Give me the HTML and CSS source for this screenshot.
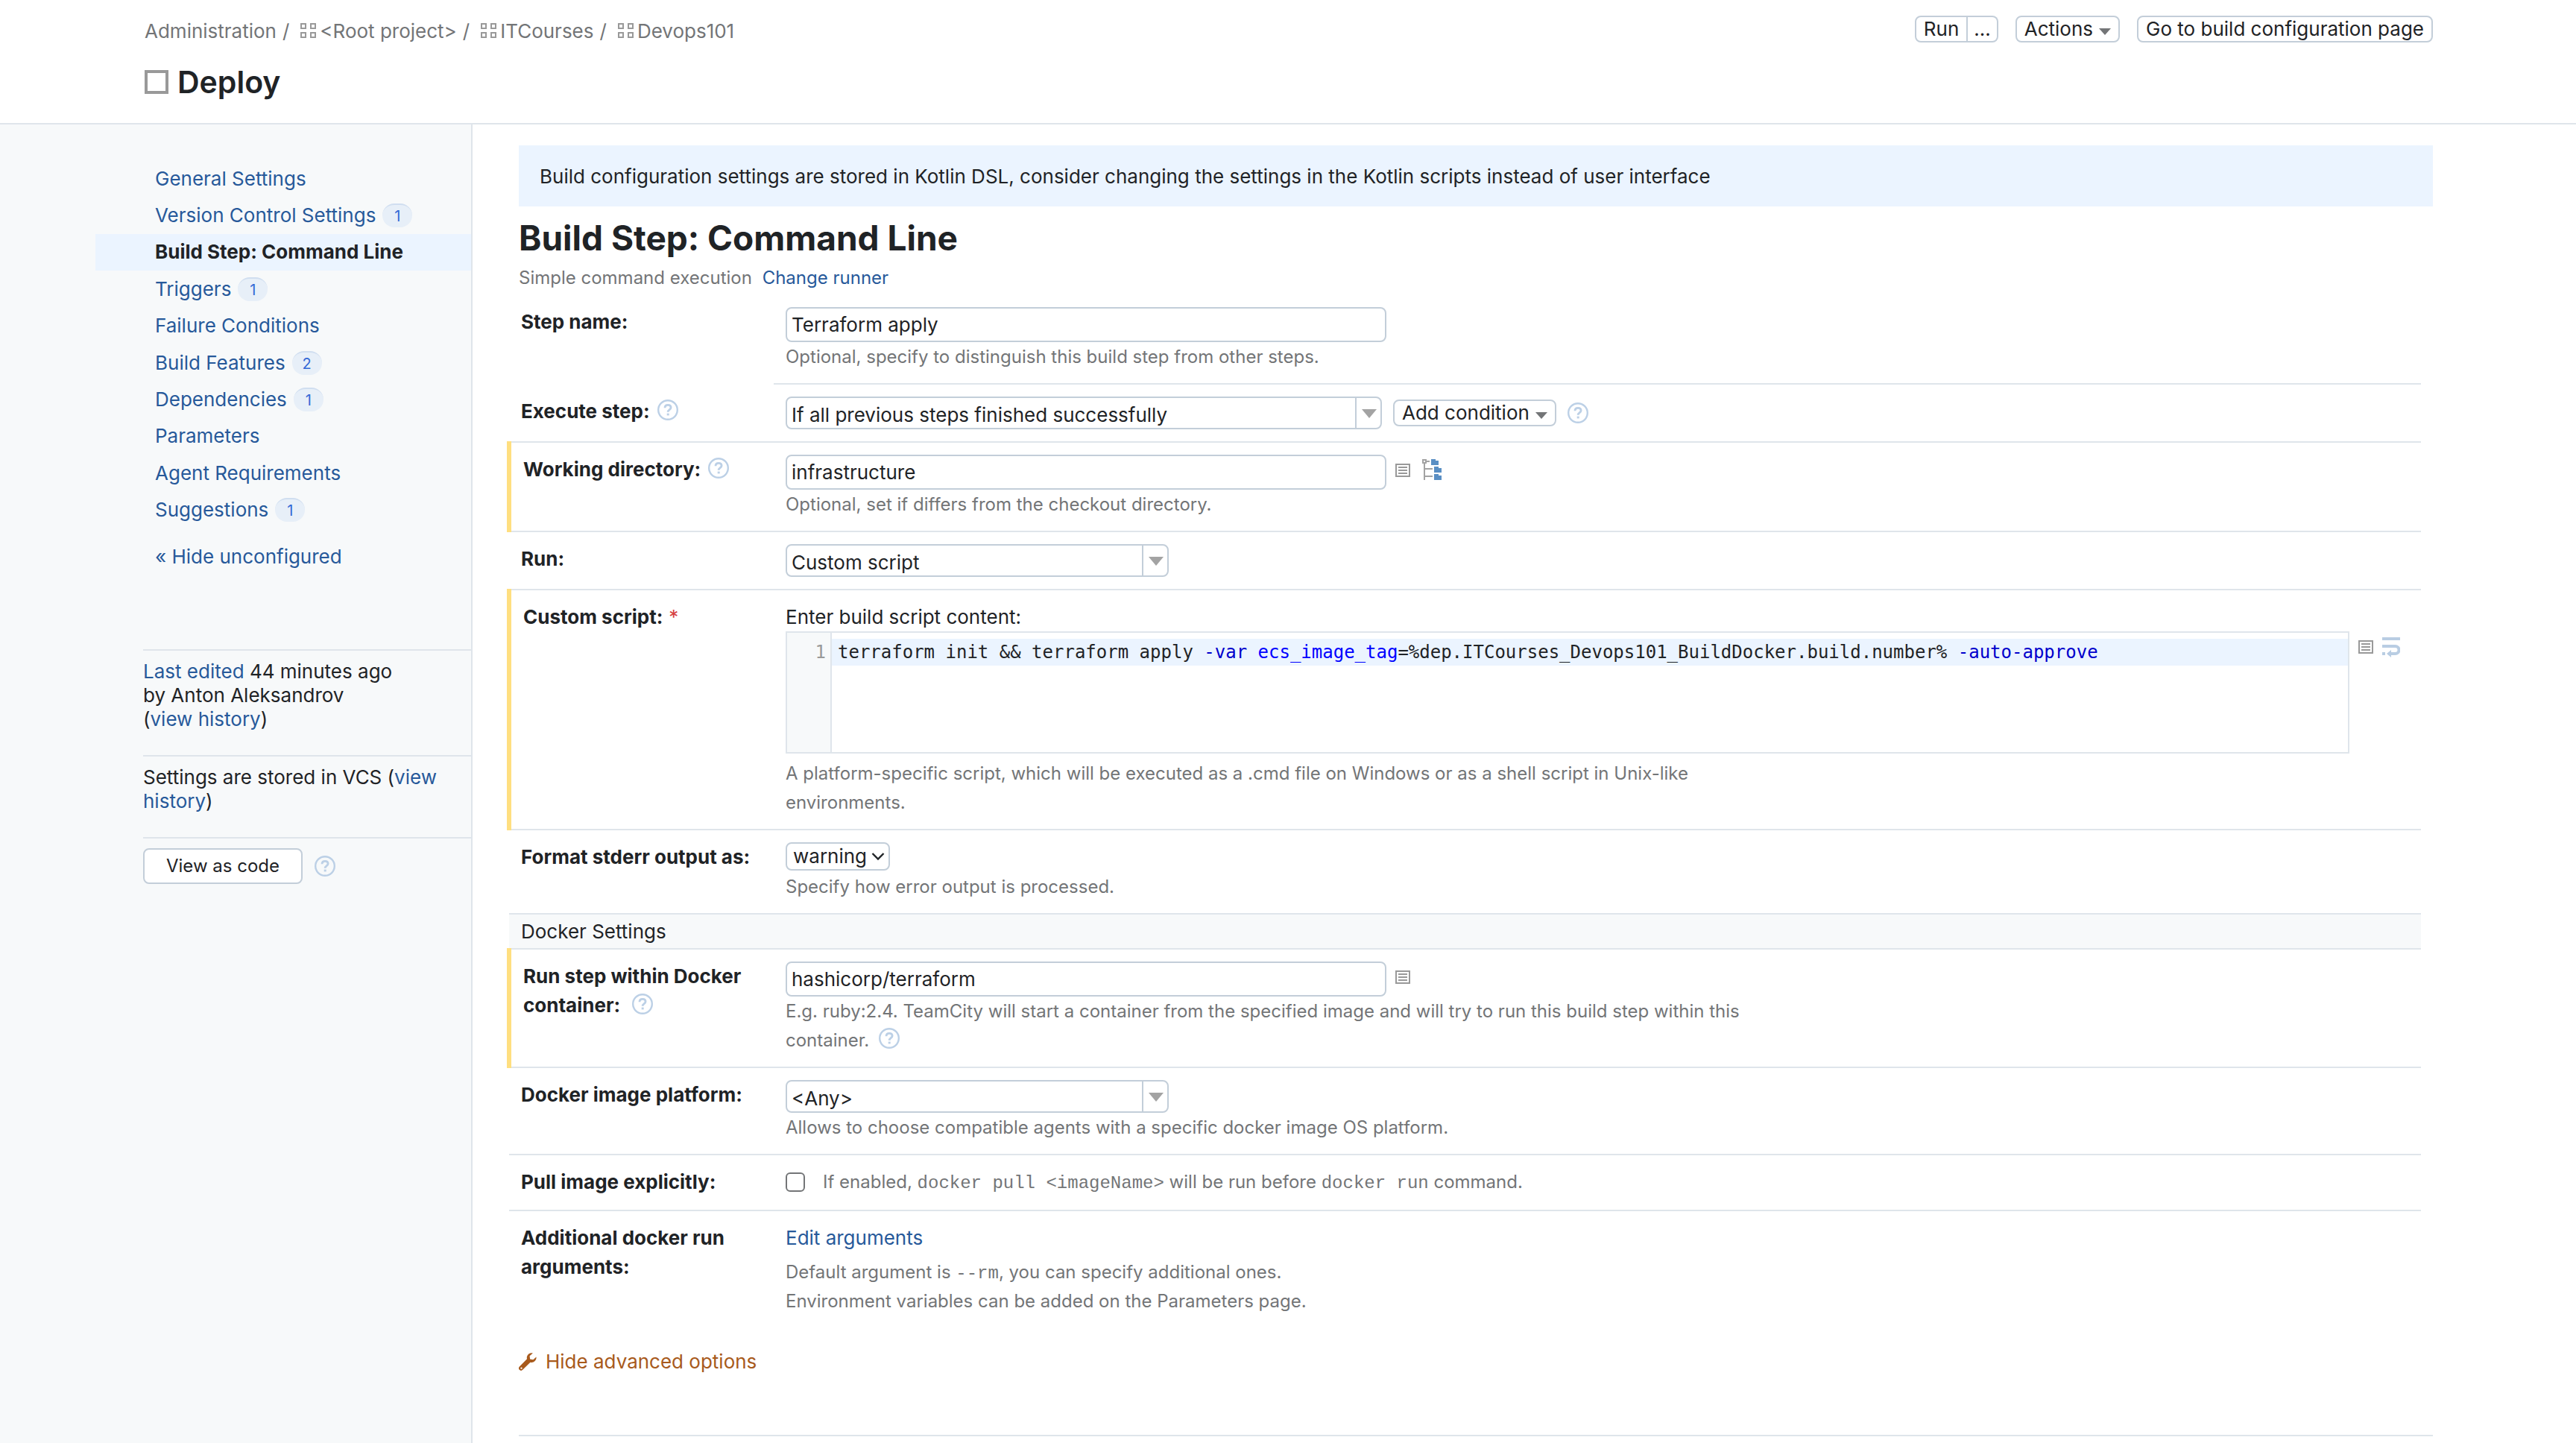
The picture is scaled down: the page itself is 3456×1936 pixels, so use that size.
FILE: index.html
```html
<!DOCTYPE html>
<html lang="en">
<head>
<meta charset="utf-8">
<title>Deploy – Build Step: Command Line</title>
<link rel="stylesheet" href="styles.css">
</head>
<body>
<svg class="sprite" aria-hidden="true">
  <symbol id="i-project" viewBox="0 0 22 20"><path d="M1 1h6v6H1zM14 1h6v6h-6zM1 13h6v6H1zM14 13h6v6h-6z" fill="none" stroke="#999" stroke-width="2"/></symbol>
  <symbol id="i-help" viewBox="0 0 28 28"><circle cx="14" cy="14" r="12.8" fill="none" stroke="#bcd0e6" stroke-width="2.4"/><path d="M10 11.200c0-2.400 1.700-3.900 4.100-3.900s4 1.400 4 3.500c0 3-3.900 2.800-3.900 6" fill="none" stroke="#bcd0e6" stroke-width="2.800"/><path d="M12.700 18.600h3v2.800h-3z" fill="#bcd0e6"/></symbol>
  <symbol id="i-params" viewBox="0 0 20 18"><path d="M1 1h18v16H1z" fill="none" stroke="#999" stroke-width="2"/><path d="M4 5h12M4 9h12M4 13h12" stroke="#999" stroke-width="2"/></symbol>
  <symbol id="i-tree" viewBox="0 0 26 28"><path d="M1 1h4v4H1zM6 3h4M3 6v22M4 13h10M4 23h10" fill="none" stroke="#a3a3a3" stroke-width="2"/><path d="M12 0h6v2h4v6H12zM16 10h6v2h4v6H16zM16 20h6v2h4v6H16z" fill="#5a8fc4"/></symbol>
  <symbol id="i-wrap" viewBox="0 0 24 28"><path d="M0 2h24M0 12h17.500a5 5 0 0 1 0 10H11M0 22h4" fill="none" stroke="#b9cde3" stroke-width="4"/><path d="M12 17v10l-6-5z" fill="#b9cde3"/></symbol>
  <symbol id="i-wrench" viewBox="0 0 24 24"><path d="M23.500 5.500l-4.200 3.700-4.200-.700-.500-4.200L18.800.500C15.500-.300 12 1.500 11 5c-.300 1.200-.200 2.200 0 3.300L.900 18.600a3 3 0 0 0 0 4.200 3 3 0 0 0 4.300 0L15.500 12.800c4.500 1 8.500-2.300 8-7.300zM3.500 21.800a1.200 1.200 0 1 1 0-2.400 1.200 1.200 0 0 1 0 2.400z" fill="#a85a1c" fill-rule="evenodd"/></symbol>
</svg>

<header class="header">
  <div class="topline">
    <nav class="crumbs" aria-label="Breadcrumb">
      <a href="#">Administration</a><span class="sep">/</span>
      <a href="#"><svg class="i-project"><use href="#i-project"/></svg>&lt;Root project&gt;</a><span class="sep">/</span>
      <a href="#"><svg class="i-project"><use href="#i-project"/></svg>ITCourses</a><span class="sep">/</span>
      <a href="#"><svg class="i-project"><use href="#i-project"/></svg>Devops101</a>
    </nav>
    <div class="actions">
      <div class="split"><button class="btn" type="button">Run</button><button class="btn more" type="button">...</button></div>
      <button class="btn" type="button">Actions<span class="caret"></span></button>
      <button class="btn" type="button">Go to build configuration page</button>
    </div>
  </div>
  <h1><span class="config-icon"></span>Deploy</h1>
</header>

<div class="body">
  <aside class="sidebar">
    <nav aria-label="Settings">
      <ul class="menu">
        <li><a href="#">General Settings</a></li>
        <li><a href="#">Version Control Settings</a><span class="count">1</span></li>
        <li class="current"><a href="#">Build Step: Command Line</a></li>
        <li><a href="#">Triggers</a><span class="count">1</span></li>
        <li><a href="#">Failure Conditions</a></li>
        <li><a href="#">Build Features</a><span class="count">2</span></li>
        <li><a href="#">Dependencies</a><span class="count">1</span></li>
        <li><a href="#">Parameters</a></li>
        <li><a href="#">Agent Requirements</a></li>
        <li><a href="#">Suggestions</a><span class="count">1</span></li>
      </ul>
      <a class="toggle" href="#">« Hide unconfigured</a>
    </nav>
    <div class="info">
      <p><a href="#">Last edited</a> 44 minutes ago<br>by Anton Aleksandrov<br>(<a href="#">view history</a>)</p>
      <p>Settings are stored in VCS (<a href="#">view history</a>)</p>
      <div class="code-row"><button class="btn big" type="button">View as code</button><svg class="help"><use href="#i-help"/></svg></div>
    </div>
  </aside>

  <main class="main">
    <div class="notice">Build configuration settings are stored in Kotlin DSL, consider changing the settings in the Kotlin scripts instead of user interface</div>
    <h2>Build Step: Command Line</h2>
    <p class="runner">Simple command execution <a href="#">Change runner</a></p>

    <form class="form">
      <div class="row short">
        <label class="name" for="step">Step name:</label>
        <div class="field">
          <input class="text" id="step" type="text" value="Terraform apply">
          <p class="note">Optional, specify to distinguish this build step from other steps.</p>
        </div>
      </div>
      <div class="row">
        <div class="name"><label for="exec">Execute step:</label><svg class="help"><use href="#i-help"/></svg></div>
        <div class="field">
          <div class="line">
            <div class="combo wide"><select id="exec"><option>If all previous steps finished successfully</option></select></div>
            <button class="btn" type="button">Add condition<span class="caret"></span></button>
            <svg class="help"><use href="#i-help"/></svg>
          </div>
        </div>
      </div>
      <div class="row changed">
        <div class="name"><label for="dir">Working directory:</label><svg class="help"><use href="#i-help"/></svg></div>
        <div class="field">
          <div class="line icons">
            <input class="text" id="dir" type="text" value="infrastructure">
            <svg class="params"><use href="#i-params"/></svg>
            <svg class="tree"><use href="#i-tree"/></svg>
          </div>
          <p class="note">Optional, set if differs from the checkout directory.</p>
        </div>
      </div>
      <div class="row">
        <label class="name" for="run">Run:</label>
        <div class="field"><div class="combo"><select id="run"><option>Custom script</option></select></div></div>
      </div>
      <div class="row changed">
        <div class="name">Custom script:<span class="star">*</span></div>
        <div class="field">
          <p class="caption">Enter build script content:</p>
          <div class="editor-line">
            <div class="editor">
              <div class="gutter">1</div>
              <pre class="code"><code>terraform init &amp;&amp; terraform apply <span class="attr">-var</span> <span class="var">ecs_image_tag</span>=%dep.ITCourses_Devops101_BuildDocker.build.number% <span class="attr">-auto-approve</span></code></pre>
            </div>
            <svg class="params"><use href="#i-params"/></svg>
            <svg class="wrap"><use href="#i-wrap"/></svg>
          </div>
          <p class="note spaced">A platform-specific script, which will be executed as a .cmd file on Windows or as a shell script in Unix-like environments.</p>
        </div>
      </div>
      <div class="row">
        <label class="name" for="stderr">Format stderr output as:</label>
        <div class="field">
          <div class="native"><select id="stderr"><option>warning</option></select><svg viewBox="0 0 18 12"><path d="M1.500 2L9 9.500 16.500 2" fill="none" stroke="#1f2326" stroke-width="2.400"/></svg></div>
          <p class="note">Specify how error output is processed.</p>
        </div>
      </div>
      <h3 class="group">Docker Settings</h3>
      <div class="row changed">
        <div class="name"><label for="image">Run step within Docker container:</label> <svg class="help"><use href="#i-help"/></svg></div>
        <div class="field">
          <div class="line icons">
            <input class="text" id="image" type="text" value="hashicorp/terraform">
            <svg class="params"><use href="#i-params"/></svg>
          </div>
          <p class="note">E.g. ruby:2.4. TeamCity will start a container from the specified image and will try to run this build step within this container. <svg class="help"><use href="#i-help"/></svg></p>
        </div>
      </div>
      <div class="row">
        <label class="name" for="platform">Docker image platform:</label>
        <div class="field">
          <div class="combo"><select id="platform"><option>&lt;Any&gt;</option></select></div>
          <p class="note">Allows to choose compatible agents with a specific docker image OS platform.</p>
        </div>
      </div>
      <div class="row">
        <label class="name" for="pull">Pull image explicitly:</label>
        <div class="field check"><input id="pull" type="checkbox"><p class="note">If enabled, <code>docker pull &lt;imageName&gt;</code> will be run before <code>docker run</code> command.</p></div>
      </div>
      <div class="row last">
        <div class="name">Additional docker run arguments:</div>
        <div class="field">
          <a class="edit" href="#">Edit arguments</a>
          <p class="note spaced">Default argument is <code>--rm</code>, you can specify additional ones.<br>Environment variables can be added on the Parameters page.</p>
        </div>
      </div>
    </form>
    <a class="advanced" href="#"><svg><use href="#i-wrench"/></svg>Hide advanced options</a>
    <hr>
  </main>
</div>
</body>
</html>
```
FILE: styles.css
```css
* { box-sizing: border-box; }
body {
  margin: 0;
  min-height: 100vh;
  display: flex;
  flex-direction: column;
  font: 26px/32px Inter, "Liberation Sans", sans-serif;
  color: #1f2326;
  background: #fff;
}
a { color: #27599a; text-decoration: none; }
p, h1, h2, h3, ul, pre { margin: 0; padding: 0; }
input, select, button { font: inherit; color: inherit; margin: 0; }
.sprite { position: absolute; width: 0; height: 0; }
svg { flex: none; }

/* Header */
.header { padding: 21px 192px 29px 194px; border-bottom: 2px solid #dfe5eb; }
.topline { display: flex; justify-content: space-between; align-items: flex-start; }
.crumbs { display: flex; color: #737577; padding-top: 5px; }
.crumbs a { color: inherit; }
.sep { margin: 0 15px 0 8px; }
.i-project { width: 22px; height: 20px; margin-right: 4px; }
.actions { display: flex; gap: 23px; }
.btn {
  height: 36px;
  padding: 0 10px;
  line-height: 32px;
  border: 2px solid #c3ced9;
  border-radius: 8px;
  background: #fff;
  white-space: nowrap;
}
.split { display: flex; }
.split .btn:first-child { border-radius: 8px 0 0 8px; }
.split .more { border-left: 0; border-radius: 0 8px 8px 0; padding: 0 8px; }
.caret {
  display: inline-block;
  margin-left: 8px;
  vertical-align: 1px;
  border: 8px solid transparent;
  border-top: 9px solid #737577;
  border-bottom: 0;
}
h1 { display: flex; align-items: center; gap: 12px; font-size: 41px; line-height: 52px; font-weight: 600; margin-top: 26px; }
.config-icon { width: 32px; height: 32px; border: 4px solid #999; }

/* Sidebar */
.body { flex: 1; display: grid; grid-template-columns: 634px 1fr; }
.sidebar { background: #f7f9fa; border-right: 2px solid #dfe5eb; padding-top: 48px; }
.menu { display: grid; grid-auto-rows: 1fr; height: 494px; list-style: none; }
.menu li { display: flex; align-items: center; margin-left: 128px; padding-left: 80px; }
.menu li.current { background: #ebf4ff; font-weight: 700; }
.menu li.current a { color: inherit; }
.count {
  min-width: 40px;
  height: 32px;
  margin-left: 9px;
  border-top: 2px solid #d0def0;
  border-radius: 16px;
  background: #e7eff8;
  color: #3369d6;
  font-size: 20px;
  line-height: 30px;
  text-align: center;
}
.toggle { display: block; margin: 22px 0 108px 208px; }
.info { margin-left: 192px; }
.info p { border-top: 2px solid #dfe5eb; padding: 12px 40px 32px 0; line-height: 32px; }
.code-row { display: flex; align-items: center; gap: 16px; border-top: 2px solid #dfe5eb; padding-top: 13px; }
.big { height: 48px; line-height: 44px; padding: 0 29px; font-size: 24px; }
.help { width: 28px; height: 28px; }

/* Content */
.main { padding: 28px 192px 0 62px; }
.notice { background: #ebf4ff; padding: 26px 28px 24px; }
h2 { font-size: 46px; line-height: 60px; font-weight: 700; margin-top: 12px; }
.runner { font-size: 24px; margin-top: 8px; color: #737577; }
.runner a { margin-left: 7px; }
.form { margin: 7px 16px 0 -13px; }
.row { display: grid; grid-template-columns: 355px 1fr; padding: 16px 0; border-bottom: 2px solid #dfe5eb; position: relative; }
.row.short { border-color: transparent; }
.row.short::after { content: ""; position: absolute; left: 355px; right: 0; bottom: -2px; border-bottom: 2px solid #dfe5eb; }
.row.changed::before { content: ""; position: absolute; left: -3px; top: -2px; bottom: -2px; width: 6px; background: #ffdf80; }
.row.changed .name { padding-left: 19px; }
.row.last { border: 0; }
.name { padding-left: 16px; line-height: 39px; font-weight: 700; }
.name .help { margin-left: 10px; vertical-align: -3px; }
.star { color: #d64040; font-weight: 400; margin-left: 8px; }
.field { padding-left: 16px; min-width: 0; }
.text { display: block; width: 806px; height: 47px; padding: 0 6px; border: 2px solid #c3ced9; border-radius: 8px; background: #fff; }
.note { font-size: 24px; line-height: 39px; color: #737577; max-width: 1280px; }
.note.spaced { margin-top: 7px; }
.note .help { margin-left: 6px; vertical-align: -3px; }
.note code { font-family: "Liberation Mono", monospace; font-size: 24px; line-height: 32px; }
.line { display: flex; align-items: center; gap: 15px; }
.icons { align-items: flex-start; gap: 12px; }
.params { width: 20px; height: 18px; margin-top: 12px; }
.tree { width: 26px; height: 28px; margin: 6px 0 0 4px; }
.combo { position: relative; width: 514px; }
.combo.wide { width: 800px; }
.combo select { appearance: none; display: block; width: 100%; height: 44px; padding: 6px 40px 0 6px; border: 2px solid #c3ced9; border-radius: 8px; background: #fff; }
.combo::before { content: ""; position: absolute; right: 34px; top: 2px; bottom: 2px; border-left: 2px solid #c3ced9; }
.combo::after { content: ""; position: absolute; right: 7px; top: 17px; border: 10px solid transparent; border-top: 12px solid #a3a3a3; border-bottom: 0; }
.caption { line-height: 39px; }
.editor-line { display: flex; gap: 12px; padding-right: 28px; }
.editor { flex: 1; display: grid; grid-template-columns: 60px 1fr; height: 164px; border: 2px solid #dfe5eb; font: 24px/36px "DejaVu Sans Mono", monospace; }
.gutter { background: #f7f9fa; border-right: 2px solid #dfe5eb; padding: 8px 6px; text-align: right; color: #999; }
.code { margin-top: 8px; height: 36px; padding-left: 8px; background: #ebf4ff; font: inherit; }
.code code { font: inherit; }
.attr { color: #00c; }
.var { color: #00f; }
.wrap { width: 24px; height: 28px; margin-top: 8px; }
.native { position: relative; width: 140px; margin-bottom: 2px; }
.native select { appearance: none; display: block; width: 100%; height: 38px; padding: 0 30px 0 8px; border: 2px solid #c3ced9; border-radius: 8px; background: #fff; }
.native svg { position: absolute; right: 7px; top: 13px; width: 18px; height: 12px; }
.group { font: inherit; line-height: 45px; padding-left: 16px; background: #f7f9fa; border-bottom: 2px solid #dfe5eb; }
.check { display: flex; gap: 24px; align-items: center; padding-bottom: 2px; }
.check input { appearance: none; width: 26px; height: 26px; border: 2px solid #737577; border-radius: 6px; background: #fff; }
.edit { display: block; line-height: 39px; }
.advanced { display: flex; align-items: center; gap: 12px; color: #a85a1c; margin-top: 30px; }
.advanced svg { width: 24px; height: 24px; }
hr { border: 0; border-top: 2px solid #dfe5eb; margin: 82px 0 0; }
```
